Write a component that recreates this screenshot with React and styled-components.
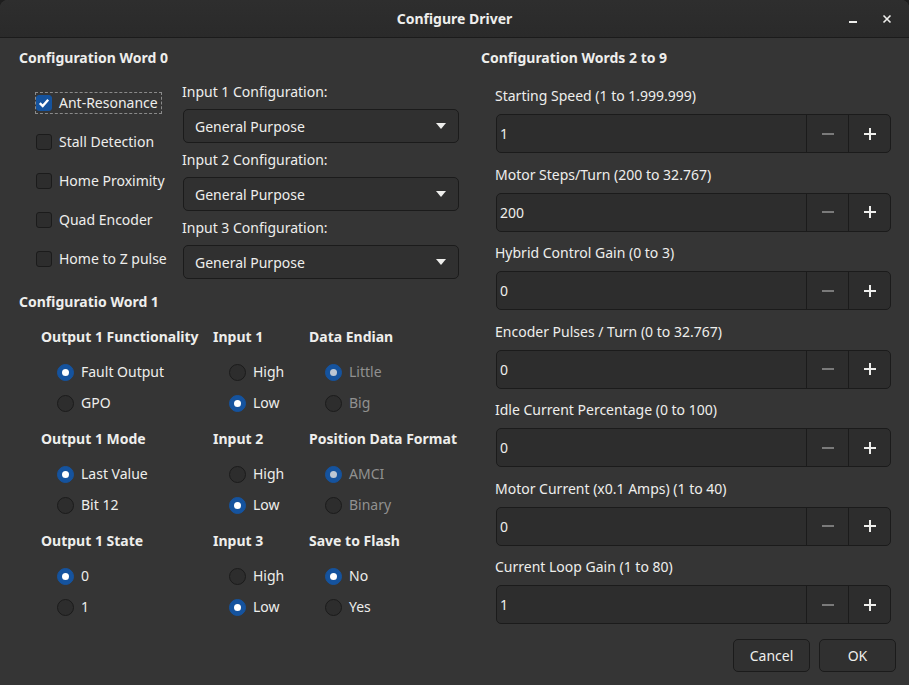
import React from 'react';
import styled, { createGlobalStyle } from 'styled-components';

const GlobalStyle = createGlobalStyle`
  html, body {
    margin: 0;
    padding: 0;
    background: #1e1e1e;
  }
  body {
    font-family: "Noto Sans", "Open Sans", sans-serif;
    font-size: 14px;
    color: #eeeeec;
  }
`;

const Window = styled.div`
  width: 909px;
  height: 685px;
  display: flex;
  flex-direction: column;
  background: #353535;
  border-radius: 8px 8px 0 0;
  overflow: hidden;
  box-sizing: border-box;
`;

const TitleBar = styled.div`
  position: relative;
  height: 37px;
  flex: none;
  display: flex;
  align-items: center;
  justify-content: center;
  background: linear-gradient(#2e2e2e, #2a2a2a);
  border-bottom: 1px solid #1b1b1b;
`;

const Title = styled.div`
  font-weight: 700;
  font-size: 14px;
`;

const WinButtons = styled.div`
  position: absolute;
  right: 10px;
  top: 0;
  bottom: 0;
  display: flex;
  align-items: center;
  gap: 10px;
`;

const WinButton = styled.div`
  width: 24px;
  height: 24px;
  display: flex;
  align-items: center;
  justify-content: center;
  color: #eeeeec;
`;

const Body = styled.div`
  flex: 1;
  min-height: 0;
  display: grid;
  grid-template-columns: 462px 1fr;
`;

const Pane = styled.div`
  padding: ${p => p.$pad};
  display: flex;
  flex-direction: column;
`;

const SectionTitle = styled.div`
  font-weight: 700;
  line-height: 18px;
  height: 18px;
  margin-bottom: ${p => p.$mb || 0}px;
`;

const Word0 = styled.div`
  display: flex;
  margin-bottom: 6px;
`;

const CheckColumn = styled.div`
  width: 147px;
  padding: 9px 0 0 16px;
  display: flex;
  flex-direction: column;
  gap: 17px;
`;

const CheckRow = styled.div`
  display: flex;
  align-items: center;
  gap: 7px;
  height: 22px;
  align-self: flex-start;
  padding: 0 4px 0 1px;
  outline: ${p => (p.$focus ? '1px dashed #8a8a8a' : 'none')};
  outline-offset: -1px;
`;

const CheckBox = styled.div`
  width: 16px;
  height: 16px;
  box-sizing: border-box;
  border-radius: 3px;
  border: 1px solid ${p => (p.$checked ? '#15539e' : '#1b1b1b')};
  background: ${p => (p.$checked ? '#15539e' : '#2d2d2d')};
  display: flex;
  align-items: center;
  justify-content: center;
`;

const Label = styled.span`
  line-height: 18px;
  white-space: nowrap;
  color: ${p => (p.$disabled ? '#919190' : '#eeeeec')};
`;

const ComboColumn = styled.div`
  flex: 1;
  display: flex;
  flex-direction: column;
`;

const ComboLabel = styled.div`
  line-height: 18px;
  margin-bottom: 8px;
`;

const Combo = styled.div`
  height: 34px;
  box-sizing: border-box;
  margin-left: 1px;
  margin-bottom: 8px;
  border: 1px solid #1b1b1b;
  border-radius: 5px;
  background: #303030;
  display: flex;
  align-items: center;
  justify-content: space-between;
  padding: 0 12px 0 11px;
`;

const RadioGrid = styled.div`
  display: grid;
  grid-template-columns: 172px 96px 1fr;
  padding-left: 22px;
  margin-top: 17px;
  row-gap: 15px;
`;

const RadioGroup = styled.div`
  display: flex;
  flex-direction: column;
`;

const GroupHeader = styled.div`
  font-weight: 700;
  line-height: 18px;
  height: 18px;
  margin-bottom: 14px;
  white-space: nowrap;
`;

const RadioList = styled.div`
  display: flex;
  flex-direction: column;
  gap: 7px;
  padding-left: 17px;
`;

const RadioRow = styled.div`
  display: flex;
  align-items: center;
  gap: 7px;
  height: 24px;
`;

const Radio = styled.div`
  width: 17px;
  height: 17px;
  margin-left: -1px;
  border-radius: 50%;
  box-sizing: border-box;
  border: 1px solid ${p => (p.$checked ? '#15539e' : '#1b1b1b')};
  background: ${p => (p.$checked ? '#15539e' : '#2d2d2d')};
  display: flex;
  align-items: center;
  justify-content: center;

  &::after {
    content: '';
    display: ${p => (p.$checked ? 'block' : 'none')};
    width: 7px;
    height: 7px;
    border-radius: 50%;
    background: ${p => (p.$disabled ? '#bcc6d3' : '#ffffff')};
  }
`;

const FieldLabel = styled.div`
  line-height: 18px;
  margin-bottom: 9px;
  padding-left: 14px;
`;

const Spin = styled.div`
  height: 39px;
  box-sizing: border-box;
  margin-left: 15px;
  margin-bottom: 12.5px;
  border: 1px solid #1b1b1b;
  border-radius: 5px;
  background: #2d2d2d;
  display: flex;
  overflow: hidden;
`;

const SpinValue = styled.div`
  flex: 1;
  display: flex;
  align-items: center;
  padding-left: 3px;
`;

const SpinButton = styled.div`
  width: 41px;
  border-left: 1px solid #1b1b1b;
  display: flex;
  align-items: center;
  justify-content: center;
  color: ${p => (p.$disabled ? '#7a7a7a' : '#eeeeec')};
`;

const Footer = styled.div`
  flex: none;
  display: flex;
  justify-content: flex-end;
  gap: 9px;
  padding: 2px 13px 13px 0;
`;

const Button = styled.div`
  width: 77px;
  height: 33px;
  box-sizing: border-box;
  border: 1px solid #1b1b1b;
  border-radius: 5px;
  background: #303030;
  display: flex;
  align-items: center;
  justify-content: center;
`;

const Check = () => (
  <svg width="12" height="12" viewBox="0 0 12 12">
    <path d="M1.8 6.2 L4.7 9 L10.2 2.8" fill="none" stroke="#fff" strokeWidth="2.4" />
  </svg>
);

const Arrow = () => (
  <svg width="10" height="6" viewBox="0 0 10 6">
    <path d="M0 0 H10 L5 6 Z" fill="#eeeeec" />
  </svg>
);

const Minus = () => (
  <svg width="12" height="12" viewBox="0 0 12 12">
    <rect x="0" y="5" width="12" height="2" fill="currentColor" />
  </svg>
);

const Plus = () => (
  <svg width="12" height="12" viewBox="0 0 12 12">
    <rect x="0" y="5" width="12" height="2" fill="currentColor" />
    <rect x="5" y="0" width="2" height="12" fill="currentColor" />
  </svg>
);

const checks = [
  { label: 'Ant-Resonance', checked: true },
  { label: 'Stall Detection' },
  { label: 'Home Proximity' },
  { label: 'Quad Encoder' },
  { label: 'Home to Z pulse' },
];

const groups = [
  { title: 'Output 1 Functionality', options: ['Fault Output', 'GPO'], sel: 0 },
  { title: 'Input 1', options: ['High', 'Low'], sel: 1 },
  { title: 'Data Endian', options: ['Little', 'Big'], sel: 0, disabled: true },
  { title: 'Output 1 Mode', options: ['Last Value', 'Bit 12'], sel: 0 },
  { title: 'Input 2', options: ['High', 'Low'], sel: 1 },
  { title: 'Position Data Format', options: ['AMCI', 'Binary'], sel: 0, disabled: true },
  { title: 'Output 1 State', options: ['0', '1'], sel: 0 },
  { title: 'Input 3', options: ['High', 'Low'], sel: 1 },
  { title: 'Save to Flash', options: ['No', 'Yes'], sel: 0 },
];

const fields = [
  { label: 'Starting Speed (1 to 1.999.999)', value: '1' },
  { label: 'Motor Steps/Turn (200 to 32.767)', value: '200' },
  { label: 'Hybrid Control Gain (0 to 3)', value: '0' },
  { label: 'Encoder Pulses / Turn (0 to 32.767)', value: '0' },
  { label: 'Idle Current Percentage (0 to 100)', value: '0' },
  { label: 'Motor Current (x0.1 Amps) (1 to 40)', value: '0' },
  { label: 'Current Loop Gain (1 to 80)', value: '1' },
];

export default function App() {
  return (
    <>
      <GlobalStyle />
      <Window>
        <TitleBar>
          <Title>Configure Driver</Title>
          <WinButtons>
            <WinButton>
              <svg width="10" height="10" viewBox="0 0 10 10">
                <rect x="1" y="7" width="8" height="2" fill="currentColor" />
              </svg>
            </WinButton>
            <WinButton>
              <svg width="10" height="10" viewBox="0 0 10 10">
                <path d="M1.5 1.5 L8.5 8.5 M8.5 1.5 L1.5 8.5" stroke="currentColor" strokeWidth="1.6" />
              </svg>
            </WinButton>
          </WinButtons>
        </TitleBar>
        <Body>
          <Pane $pad="11px 3px 0 19px">
            <SectionTitle $mb={16}>Configuration Word 0</SectionTitle>
            <Word0>
              <CheckColumn>
                {checks.map(c => (
                  <CheckRow key={c.label} $focus={c.checked}>
                    <CheckBox $checked={c.checked}>{c.checked && <Check />}</CheckBox>
                    <Label>{c.label}</Label>
                  </CheckRow>
                ))}
              </CheckColumn>
              <ComboColumn>
                {[1, 2, 3].map(n => (
                  <React.Fragment key={n}>
                    <ComboLabel>Input {n} Configuration:</ComboLabel>
                    <Combo>
                      <span>General Purpose</span>
                      <Arrow />
                    </Combo>
                  </React.Fragment>
                ))}
              </ComboColumn>
            </Word0>
            <SectionTitle>Configuratio Word 1</SectionTitle>
            <RadioGrid>
              {groups.map(g => (
                <RadioGroup key={g.title}>
                  <GroupHeader>{g.title}</GroupHeader>
                  <RadioList>
                    {g.options.map((o, i) => (
                      <RadioRow key={o}>
                        <Radio $checked={i === g.sel} $disabled={g.disabled} />
                        <Label $disabled={g.disabled}>{o}</Label>
                      </RadioRow>
                    ))}
                  </RadioList>
                </RadioGroup>
              ))}
            </RadioGrid>
          </Pane>
          <Pane $pad="11px 18px 0 19px">
            <SectionTitle $mb={20}>Configuration Words 2 to 9</SectionTitle>
            {fields.map(f => (
              <React.Fragment key={f.label}>
                <FieldLabel>{f.label}</FieldLabel>
                <Spin>
                  <SpinValue>{f.value}</SpinValue>
                  <SpinButton $disabled>
                    <Minus />
                  </SpinButton>
                  <SpinButton>
                    <Plus />
                  </SpinButton>
                </Spin>
              </React.Fragment>
            ))}
          </Pane>
        </Body>
        <Footer>
          <Button>Cancel</Button>
          <Button>OK</Button>
        </Footer>
      </Window>
    </>
  );
}
